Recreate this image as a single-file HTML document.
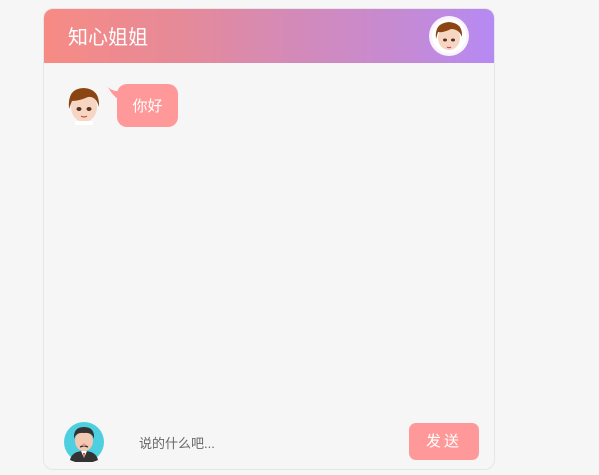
<!DOCTYPE html>
<html><head><meta charset="utf-8"><style>
body{margin:0;width:599px;height:475px;background:#f6f6f6;font-family:"Liberation Sans","Noto Sans CJK SC",sans-serif;position:relative;overflow:hidden}
.box{position:absolute;left:43px;top:8px;width:450px;height:460px;border:1px solid #e6e6e6;border-radius:10px;background:#f6f6f6;overflow:hidden}
.hd{position:absolute;left:0;top:0;width:100%;height:54px;background:linear-gradient(90deg,#f78b84 0%,#e68a98 30%,#d48ab8 55%,#c58ad4 80%,#b68af4 100%)}
.title{position:absolute;left:24px;top:12px;color:#fff;font-size:20px}
.av{position:absolute}
.bub{position:absolute;left:73px;top:75px;width:61px;height:43px;border-radius:10px;background:#ff9999;color:#fff;font-size:15px;line-height:45px;text-align:center}
.tail{position:absolute;left:64px;top:78px}
.inp{position:absolute;left:95px;top:424px;color:#666;font-size:13px}
.btn{position:absolute;left:365px;top:414px;width:70px;height:37px;border-radius:7px;background:#ff9999;color:#fff;font-size:15px;line-height:37px;text-align:center;letter-spacing:3px}
</style></head><body>
<div class="box">
<div class="hd"><div class="title">知心姐姐</div>
<svg class="av" style="left:385px;top:6px" width="40" height="42" viewBox="0 0 40 42"><circle cx="20" cy="21" r="20" fill="#fff" opacity=".9"/><circle cx="20" cy="21" r="17" fill="#fff"/><ellipse cx="20" cy="23" rx="11" ry="12" fill="#f6d5c3"/><path d="M7 24 Q5 8 20 7 Q34 8 33 22 Q30 14 22 14 Q14 18 9 17 Z" fill="#8b4513"/><ellipse cx="16" cy="25" rx="2" ry="1.5" fill="#5a3020"/><ellipse cx="24" cy="25" rx="2" ry="1.5" fill="#5a3020"/><path d="M18 32 q2 1.5 4 0" stroke="#c33" fill="none"/></svg>
</div>
<svg class="av" style="left:21px;top:76px" width="38" height="40" viewBox="0 0 38 40"><ellipse cx="19" cy="22" rx="13" ry="15" fill="#f6d5c3"/><path d="M4 24 Q2 3 19 3 Q35 4 34 22 Q31 11 23 12 Q14 16 7 16 Z" fill="#8b4513"/><ellipse cx="14" cy="24" rx="2.5" ry="2" fill="#5a3020"/><ellipse cx="24" cy="24" rx="2.5" ry="2" fill="#5a3020"/><path d="M16 31 q3 2 6 0" stroke="#c33" fill="none"/><rect x="10" y="36" width="18" height="4" fill="#fff"/></svg>
<svg class="tail" width="12" height="12"><path d="M0 0 Q5 5 12 4 L10 12 Q4 8 0 0Z" fill="#ff9999"/></svg>
<div class="bub">你好</div>
<svg class="av" style="left:20px;top:413px" width="40" height="40" viewBox="0 0 40 40"><circle cx="20" cy="20" r="20" fill="#4dcfe0"/><path d="M6 38 Q8 29 20 29 Q32 29 34 38 Q28 41 20 41 Q12 41 6 38Z" fill="#333"/><path d="M17 29 L20 36 L23 29Z" fill="#fff"/><path d="M19 31 L20 36 L21 31Z" fill="#c33"/><ellipse cx="20" cy="19" rx="9" ry="10" fill="#f2c8b0"/><path d="M10 17 Q9 5 20 5 Q31 5 30 17 Q28 10 20 11 Q12 10 10 17Z" fill="#333"/><path d="M16 25 q4 -2 8 0" stroke="#333" stroke-width="1.5" fill="none"/><circle cx="20" cy="23" r="1.5" fill="#e88"/></svg>
<div class="inp">说的什么吧...</div>
<div class="btn">发送</div>
</div>
</body></html>
